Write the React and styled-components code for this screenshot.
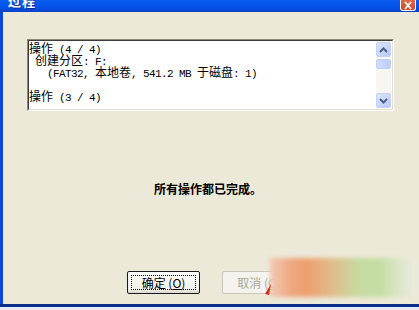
import React from "react";
import styled, { createGlobalStyle } from "styled-components";

const Global = createGlobalStyle`
  html, body { margin: 0; padding: 0; overflow: hidden; background: #e4ebf7; }
  body { font-family: "Noto Sans CJK SC", "Liberation Sans", sans-serif; }
`;

const Screen = styled.div`
  position: relative;
  width: 419px;
  height: 310px;
  overflow: hidden;
  display: flex;
  flex-direction: column;
`;

const Window = styled.div`
  width: 422px;
  height: 307px;
  flex: none;
  display: flex;
  flex-direction: column;
  border-bottom: 3px solid #0b2f8c;
  box-sizing: border-box;
`;

const TitleBar = styled.div`
  height: 12px;
  flex: none;
  display: flex;
  align-items: flex-start;
  padding: 0 6px 0 8px;
  background: linear-gradient(#0a5ef2, #0350e6 70%, #0a3fc0);
  overflow: hidden;
`;

const Title = styled.span`
  margin-top: -6px;
  font: bold 13px/14px "Noto Sans CJK SC", sans-serif;
  color: #fff;
  letter-spacing: 1px;
  text-shadow: 1px 1px 0 #0a2a90;
`;

const CloseBtn = styled.div`
  margin-left: auto;
  width: 16px;
  height: 11px;
  box-sizing: border-box;
  border: 1px solid #fff;
  border-top: none;
  border-radius: 0 0 3px 3px;
  background: linear-gradient(#e06a4a, #c94a26);
  display: flex;
  align-items: center;
  justify-content: center;
`;

const Client = styled.div`
  flex: 1;
  background: #ece9d8;
  border-left: 3px solid #0a47d6;
  display: flex;
  flex-direction: column;
  padding-top: 27px;
`;

const LogBox = styled.div`
  margin-left: 24px;
  width: 367px;
  height: 72px;
  box-sizing: border-box;
  border: 1px solid;
  border-color: #8a8980 #fff #fff #8a8980;
  display: flex;
`;

const LogInner = styled.div`
  flex: 1;
  display: flex;
  border: 1px solid;
  border-color: #3c3c3c #e2dfd0 #e2dfd0 #3c3c3c;
  background: #fff;
`;

const LogText = styled.div`
  flex: 1;
  padding: 1px 0 0 0;
  font: 11px/12px "Liberation Mono", "Noto Sans CJK SC", monospace;
  letter-spacing: -0.6px;
  color: #000;
  white-space: pre;
`;

const Line = styled.div`
  height: 12px;
  line-height: 12px;
`;

const W = styled.span`
  font-size: 12px;
  letter-spacing: 0;
  font-family: "Noto Sans CJK SC", sans-serif;
`;

const ScrollBar = styled.div`
  width: 15px;
  margin: 0 1px 1px 0;
  background: #f7f6f0;
  display: flex;
  flex-direction: column;
  padding-top: 1px;
`;

const Arrow = styled.div`
  width: 15px;
  height: 15px;
  box-sizing: border-box;
  border: 1px solid #c3d3f8;
  border-radius: 2px;
  background: linear-gradient(135deg, #dbe6fd, #b6cbf6);
  display: flex;
  align-items: center;
  justify-content: center;
  margin-top: ${p => (p.$bottom ? "auto" : "0")};
`;

const Thumb = styled.div`
  margin-top: 2px;
  height: 10px;
  box-sizing: border-box;
  border: 1px solid #c0d0f4;
  border-radius: 2px;
  background: linear-gradient(90deg, #cfdcfa, #bccdf5);
`;

const Message = styled.div`
  margin-top: 71px;
  padding-right: 9px;
  text-align: center;
  font: bold 12px/14px "Noto Sans CJK SC", sans-serif;
  color: #000;
`;

const ButtonRow = styled.div`
  margin-top: 75px;
  padding-left: 124px;
  display: flex;
  gap: 22px;
`;

const Button = styled.div`
  width: 73px;
  height: 23px;
  box-sizing: border-box;
  border: 1px solid ${p => (p.$disabled ? "#c9c7ba" : "#1a1a1a")};
  border-radius: 2px;
  background: ${p => (p.$disabled ? "#f4f3ee" : "linear-gradient(#fefefe, #f0efe8 85%, #d8d6cc)")};
  display: flex;
  padding: 3px;
`;

const Focus = styled.div`
  flex: 1;
  border: 1px dotted ${p => (p.$on ? "#000" : "transparent")};
  display: flex;
  align-items: center;
  justify-content: center;
  font: 12px/14px "Noto Sans CJK SC", sans-serif;
  color: ${p => (p.$disabled ? "#aca899" : "#000")};
`;

const U = styled.span`
  text-decoration: underline;
`;

const Overlay = styled.div`
  position: absolute;
  left: 270px;
  top: 258px;
  width: 146px;
  height: 39px;
  background: linear-gradient(90deg, #f1c9b6 0%, #eea77e 15%, #ee9f70 25%, #dcc08e 45%, #c6dca2 62%, #c4dda2 75%, #dfe6cc 90%, #ebebdf 100%);
  filter: blur(2px);
`;

const Pointer = styled.svg`
  position: absolute;
  left: 264px;
  top: 284px;
`;

const BottomStrip = styled.div`
  flex: 1;
  background: #e4ebf7;
`;

export default function App() {
  return (
    <>
      <Global />
      <Screen>
        <Window>
          <TitleBar>
            <Title>过程</Title>
            <CloseBtn>
              <svg width="10" height="9" viewBox="0 0 10 9">
                <path d="M2 1 L8 8 M8 1 L2 8" stroke="#fff" strokeWidth="1.8" />
              </svg>
            </CloseBtn>
          </TitleBar>
          <Client>
            <LogBox>
              <LogInner>
                <LogText>
                  <Line><W>操作</W> (4 / 4)</Line>
                  <Line> <W>创建分区</W>: F:</Line>
                  <Line>   (FAT32, <W>本地卷</W>, 541.2 MB <W>于磁盘</W>: 1)</Line>
                  <Line> </Line>
                  <Line><W>操作</W> (3 / 4)</Line>
                </LogText>
                <ScrollBar>
                  <Arrow>
                    <svg width="9" height="6" viewBox="0 0 9 6">
                      <path d="M1 5 L4.5 1.5 L8 5" fill="none" stroke="#4d6185" strokeWidth="2" />
                    </svg>
                  </Arrow>
                  <Thumb />
                  <Arrow $bottom>
                    <svg width="9" height="6" viewBox="0 0 9 6">
                      <path d="M1 1 L4.5 4.5 L8 1" fill="none" stroke="#4d6185" strokeWidth="2" />
                    </svg>
                  </Arrow>
                </ScrollBar>
              </LogInner>
            </LogBox>
            <Message>所有操作都已完成。</Message>
            <ButtonRow>
              <Button>
                <Focus $on>确定 (<U>O</U>)</Focus>
              </Button>
              <Button $disabled>
                <Focus $disabled>取消 (<U>C</U>)</Focus>
              </Button>
            </ButtonRow>
          </Client>
        </Window>
        <BottomStrip />
        <Overlay />
        <Pointer width="8" height="12" viewBox="0 0 8 12">
          <path d="M7 0 L1 10 L5 11 Z" fill="#e02a10" />
        </Pointer>
      </Screen>
    </>
  );
}
